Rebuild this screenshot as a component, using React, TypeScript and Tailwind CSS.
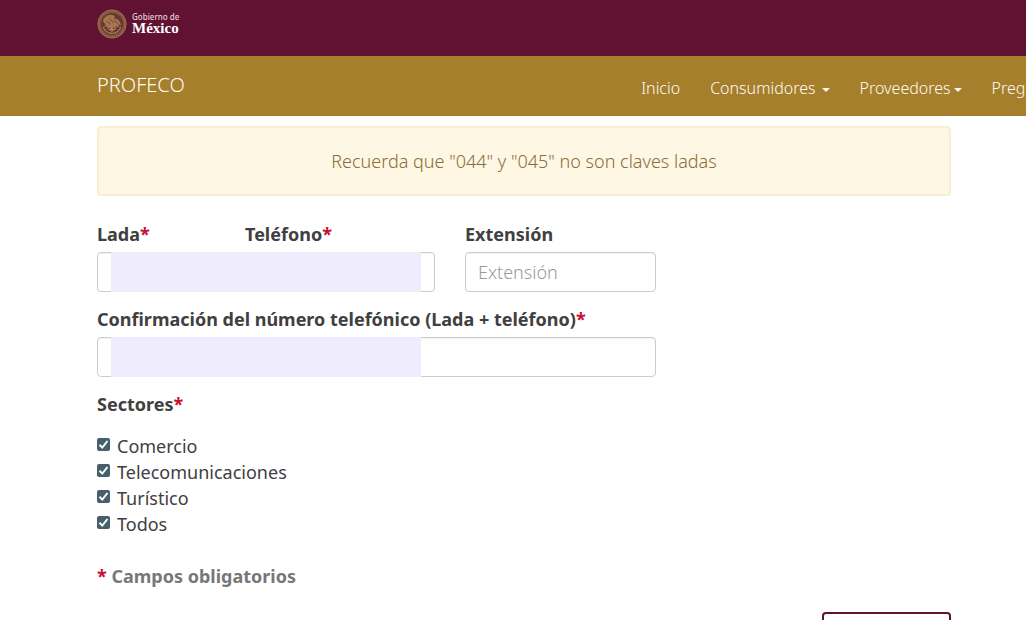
import React from 'react';

const navItems = [
  { label: 'Inicio', gap: '', caret: false },
  { label: 'Consumidores', gap: 'gap-1.5', caret: true },
  { label: 'Proveedores', gap: 'gap-[3px]', caret: true },
  { label: 'Preguntas', gap: '', caret: false }
];

const sectores = ['Comercio', 'Telecomunicaciones', 'Turístico', 'Todos'];

const inputClass =
  'block h-10 w-full rounded border border-[#ccc] bg-white px-3 font-light text-[#555] placeholder:text-[#999] shadow-[inset_0_1px_1px_rgba(0,0,0,0.05)] outline-none';

const Required: React.FC = () => <span className="text-[#c8102e]">*</span>;

const Seal: React.FC = () => (
  <svg viewBox="0 0 30 30" className="h-[30px] w-[30px]" fill="none" aria-hidden="true">
    <circle cx="15" cy="15" r="14.5" fill="#7d4a3c" />
    <circle cx="15" cy="15" r="12.4" stroke="#96694a" strokeWidth="1.6" strokeDasharray="1.2 0.8" />
    <circle cx="15" cy="15" r="10.8" fill="#6b3433" />
    {/* eagle */}
    <path d="M6 12.500c.4-4 4.400-7 9-6.600 2.300.2 3.400 1.500 2.600 2.800l-2 .6c4.400-.4 8 2.400 8.400 7.200l-2.300-1.300.2 3.600-2.500-1.700-.8 3.400-2.300-2.200-1.600 2.700-2-2.400-2.100 1.800-.5-3.100-2.800.6 1.200-2.700z" fill="#a2764f" />
    <path d="M9.500 12l4 3M12 9.500l5 4.500M17 11l4 3.500" stroke="#6b3433" strokeWidth="0.800" />
    {/* cactus and laurel */}
    <path d="M15 19v3.500M12.300 20.600h5.400" stroke="#b88d5c" strokeWidth="1.200" strokeLinecap="round" />
    <path d="M6.300 18c1.500 4.300 4.800 6.300 8.700 6.300s7.200-2 8.700-6.300" stroke="#ad8156" strokeWidth="1.600" strokeDasharray="1.800 0.600" />
    <circle cx="15" cy="15" r="14" stroke="#9c7049" strokeWidth="1" />
  </svg>
);

const App: React.FC = () => {
  return (
    <div className="flex h-screen flex-col overflow-hidden bg-white font-['Noto_Sans','Open_Sans',sans-serif] text-[18px] leading-[26px] text-[#404041]">
      <header className="flex h-14 shrink-0 items-start bg-[#611232] pt-[9px] pl-[97px]">
        <a href="#gobierno" className="flex items-center gap-[5px] text-white">
          <Seal />
          <span className="flex flex-col">
            <span className="text-[8px] leading-[8px] font-medium text-[#e6cfd6]">Gobierno de</span>
            <span className="font-['Liberation_Serif',serif] text-[15px] leading-[14px] font-bold">México</span>
          </span>
        </a>
      </header>

      <nav className="flex h-15 shrink-0 justify-between overflow-hidden bg-[#a57f2c] pl-[97px] font-light text-[#fffaf0]">
        <a href="#profeco" className="pt-4 text-[20px]">PROFECO</a>
        <ul className="-mr-10 flex gap-[30px] pt-[19px] text-[16px]">
          {navItems.map((item) => (
            <li key={item.label}>
              <a href="#menu" className={`flex items-center ${item.gap}`}>
                {item.label}
                {item.caret && (
                  <svg viewBox="0 0 8 4" className="mt-1 h-1 w-2" fill="currentColor" aria-hidden="true">
                    <path d="M0 0h8L4 4z" />
                  </svg>
                )}
              </a>
            </li>
          ))}
        </ul>
      </nav>

      <main className="pt-2.5 pr-[75px] pl-[97px]">
        <div role="alert" className="rounded border-2 border-[#f8efd3] bg-[#fdf7e3] py-[21px] text-center leading-6 font-light text-[#8a6d3b]">
          Recuerda que "044" y "045" no son claves ladas
        </div>

        <form className="mt-[25px]">
          <div className="flex max-w-[559px] flex-col gap-3.5">
            <div className="relative grid grid-cols-[118fr_190fr_191fr] gap-[30px]">
              <div>
                <label htmlFor="lada" className="mb-[5px] block font-bold">Lada<Required /></label>
                <input id="lada" type="text" className={inputClass} />
              </div>
              <div>
                <label htmlFor="telefono" className="mb-[5px] block font-bold">Teléfono<Required /></label>
                <input id="telefono" type="text" className={inputClass} />
              </div>
              <div>
                <label htmlFor="extension" className="mb-[5px] block font-bold">Extensión</label>
                <input id="extension" type="text" placeholder="Extensión" className={inputClass} />
              </div>
              <div className="absolute bottom-0 left-3.5 h-10 w-[310px] bg-[#eeecfd]" />
            </div>

            <div className="relative">
              <label htmlFor="confirmacion" className="mb-[5px] block font-bold">
                Confirmación del número telefónico (Lada + teléfono)<Required />
              </label>
              <input id="confirmacion" type="text" className={inputClass} />
              <div className="absolute bottom-0 left-3.5 h-10 w-[310px] bg-[#eeecfd]" />
            </div>
          </div>

          <fieldset className="mt-3.5">
            <legend className="mb-4 font-bold">Sectores<Required /></legend>
            {sectores.map((sector) => (
              <label key={sector} className="flex items-start gap-[7px]">
                <span className="relative mt-[5px] h-[13px] w-[13px]">
                  <input type="checkbox" defaultChecked className="block h-[13px] w-[13px] appearance-none rounded-xs bg-[#46606b]" />
                  <svg viewBox="0 0 13 13" className="pointer-events-none absolute inset-0 h-[13px] w-[13px]" fill="none" stroke="#fff" strokeWidth="2" aria-hidden="true">
                    <path d="M2.500 6.800l2.800 2.800 5.200-6.600" />
                  </svg>
                </span>
                {sector}
              </label>
            ))}
          </fieldset>

          <p className="mt-[26px] font-bold text-[#777]"><Required /> Campos obligatorios</p>

          <div className="mt-[23px] flex justify-end">
            <button type="button" aria-label="Continuar" className="h-11 w-[129px] rounded border-2 border-[#611232] bg-white" />
          </div>
        </form>
      </main>
    </div>
  );
};

export default App;
